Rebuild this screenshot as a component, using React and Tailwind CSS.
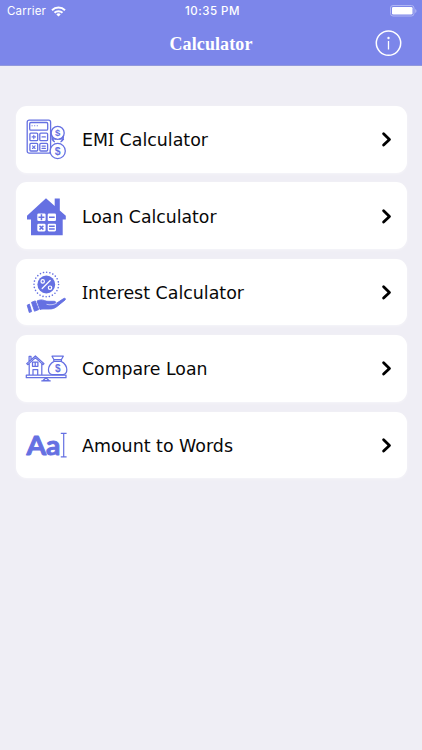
import React from "react";

const C = "#6570e2";

function Dollar({ x, y, size }) {
  return (
    <text x={x} y={y} fontSize={size} textAnchor="middle" fontFamily="Liberation Sans, sans-serif" fontWeight="700" fill={C} stroke="none">$</text>
  );
}

function EmiIcon() {
  return (
    <svg width="44" height="44" viewBox="0 0 44 44" fill="none" stroke={C} strokeWidth="1.3" strokeLinecap="round">
      <rect x="3.2" y="3.2" width="23.4" height="33" rx="2" />
      <rect x="5.7" y="5.5" width="18" height="7.7" rx="1.2" />
      <path d="M8 8.7h.2M10.6 8.7h.2M13.2 8.7h.2" strokeWidth="1.1" />
      <rect x="5.9" y="16.1" width="7.8" height="7.6" rx="1" />
      <rect x="15.8" y="16.1" width="7.8" height="7.6" rx="1" />
      <rect x="5.9" y="26.4" width="7.8" height="7.6" rx="1" />
      <rect x="15.8" y="26.4" width="7.8" height="7.6" rx="1" />
      <path d="M8.1 19.9h3.4M9.8 18.2v3.4M18 19.9h3.4M8.5 28.9l2.6 2.6M11.1 28.9l-2.6 2.6M18 29.1h3.4M18 31.4h3.4" strokeWidth="1.1" />
      <circle cx="33.7" cy="15.9" r="6.5" fill="white" />
      <path d="M28 19.5c-.3 2.2.8 4.2 2.4 5.2M39.3 19.5c.3 2.2-.8 4.2-2.4 5.2M28 22.5c1.3-.8 2.8-.9 4-.4M39.5 22.5c-1.3-.8-2.8-.9-4-.4" />
      <circle cx="33.7" cy="34" r="7.6" fill="white" />
      <Dollar x="33.7" y="19.4" size="9.5" />
      <Dollar x="33.7" y="37.7" size="10.5" />
    </svg>
  );
}

function HouseIcon() {
  return (
    <svg width="44" height="44" viewBox="0 0 44 44">
      <path d="M22 4.3 30.7 12V4.6h5.1v11.8l6 5.4v3.7h-3.1v15.8H7V25.5H3v-3.7Z" fill={C} />
      <g fill="white">
        <rect x="13.3" y="19.4" width="8.3" height="7.6" rx="1.3" />
        <rect x="23.7" y="19.4" width="8.3" height="7.6" rx="1.3" />
        <rect x="13.3" y="29.8" width="8.3" height="7.6" rx="1.3" />
        <rect x="23.7" y="29.8" width="8.3" height="7.6" rx="1.3" />
      </g>
      <path d="M14.5 23.2h5.9M17.45 20.2v6M25 23.2h5.7M15.5 31.7l3.9 3.9M19.4 31.7l-3.9 3.9M25 32.3h5.7M25 35h5.7" stroke={C} strokeWidth="1.5" />
    </svg>
  );
}

function InterestIcon() {
  return (
    <svg width="44" height="44" viewBox="0 0 44 44">
      <circle cx="22.3" cy="14.5" r="12.3" fill="none" stroke={C} strokeWidth="1.6" strokeDasharray="0.01 3.21" strokeLinecap="round" />
      <circle cx="22.3" cy="14.5" r="8.9" fill={C} />
      <g fill="none" stroke="white" strokeWidth="1.2" strokeLinecap="round">
        <path d="m18.2 18.5 8-8" />
        <circle cx="18.7" cy="11.4" r="1.7" />
        <circle cx="26" cy="17.7" r="1.7" />
      </g>
      <g fill={C} stroke={C} strokeWidth=".9" strokeLinejoin="round">
        <path d="m3.200 35.2 2.2-1.1 2.2 7.5-2.3.9Z" />
        <path d="m7.5 32.3 3.8-1.4 3.4 8.7-4.2 1.600Z" />
        <path d="M13 31c2.5-1.2 5-1.5 7.500-.4 1.5.7 3 .7 4.600.7h4.800c1.500 0 2.100.7 1.700 1.600-.4.800-1.500 1-3 1l-5.800.4c3.500.8 7.200.4 10-1.200l6.800-4.500c1.400-.8 2.500.2 1.500 1.300l-8 6.500c-2.300 1.900-4.800 2.600-7.700 2.600h-6.500c-1.200 0-2 .2-2.900.5Z" />
      </g>
      <path d="M22.500 34.300c3.700 1 7.500.5 10.300-1.300" fill="none" stroke="white" strokeWidth=".6" />
    </svg>
  );
}

function CompareIcon() {
  return (
    <svg width="44" height="44" viewBox="0 0 44 44" fill="none" stroke={C} strokeWidth="1.25" strokeLinejoin="round">
      <path d="M5.200 17v12.1M17.8 17v12.1M2.7 17.6 11.4 10l8.6 7.6-1 1-7.600-6.700-7.600 6.700ZM5.100 15V10.400H7v3" />
      <rect x="8.5" y="16" width="5.4" height="4.3" />
      <path d="M11.2 16v4.3M9 29.1v-5.600h4.700v5.600" />
      <path d="M28 10.2h11.3l-2 3.5h-7.3ZM29.800 13.700h7.600v1.700h-7.600ZM30 15.400c-7.500 4.500-6.700 13.200-1.500 13.200h10.300c5.200 0 6-8.700-1.500-13.200" />
      <rect x="2.3" y="29.2" width="39.7" height="2.5" />
      <path d="m22 31.7-3.2 3h6.400ZM17.300 34.800h9.400" />
      <Dollar x="33.7" y="25.500" size="10" />
    </svg>
  );
}

function WordsIcon() {
  return (
    <svg width="44" height="44" viewBox="0 0 44 44">
      <text x="2.4" y="31.6" textLength="34" lengthAdjust="spacingAndGlyphs" fontFamily="Lato, sans-serif" fontWeight="700" fontSize="26" fill={C} stroke={C} strokeWidth=".9" strokeLinejoin="round">Aa</text>
      <path d="M36.8 10.3h5.8M36.8 33.9h5.8M39.7 10.3v23.6" stroke={C} strokeWidth="1.2" />
    </svg>
  );
}

const items = [
  { label: "EMI Calculator", Icon: EmiIcon, width: 126 },
  { label: "Loan Calculator", Icon: HouseIcon, width: 134.5 },
  { label: "Interest Calculator", Icon: InterestIcon, width: 162 },
  { label: "Compare Loan", Icon: CompareIcon, width: 125.5 },
  { label: "Amount to Words", Icon: WordsIcon, width: 151 },
];

function Label({ text, width }) {
  return (
    <svg className="ml-[13.5px] h-6 w-48" viewBox="0 0 192 24">
      <text x="0" y="18.8" textLength={width} lengthAdjust="spacingAndGlyphs" fontSize="17" fontFamily="Verdana, DejaVu Sans, sans-serif" fill="#080808">
        {text.split(/(I)/).filter(Boolean).map((part, i) =>
          part === "I" ? <tspan key={i} fontFamily="Verdana, Noto Sans, sans-serif" fontSize="17.4">I</tspan> : part
        )}
      </text>
    </svg>
  );
}

export default function App() {
  return (
    <div className="h-[750px] w-[422px] overflow-hidden bg-[#efeef5] font-['Inter','Liberation_Sans',sans-serif]">
      <header className="h-[66px] border-b border-[#9299dc] bg-[#7c86ea] text-white">
        <div className="grid h-[22px] grid-cols-3 items-center pl-[7px] pr-[5px] text-[11.5px] leading-none">
          <div className="flex items-center gap-[5px] pt-px">
            <span className="tracking-[0.2px]">Carrier</span>
            <svg width="15" height="11" viewBox="0 0 15 11" fill="none" stroke="white" strokeWidth="2">
              <path d="M1 4.2a9.3 9.3 0 0 1 13 0M3.5 6.8a5.7 5.7 0 0 1 8 0" />
              <path d="M7.5 10.6 5.3 8.4a3.1 3.1 0 0 1 4.4 0Z" fill="white" stroke="none" />
            </svg>
          </div>
          <span className="whitespace-nowrap pl-px pt-px text-center font-medium tracking-[0.5px]">10:35 PM</span>
          <svg className="justify-self-end" width="27" height="12" viewBox="0 0 27 12">
            <rect x=".5" y=".5" width="23.5" height="10.5" rx="2.5" fill="none" stroke="#b0b6f3" />
            <rect x="2" y="2" width="20.5" height="7.5" rx="1.3" fill="white" />
            <path d="M25.2 4v4q1.3-.6 1.3-2t-1.3-2" fill="#b0b6f3" />
          </svg>
        </div>
        <div className="grid h-[43px] grid-cols-[1fr_auto_1fr] items-center px-5">
          <span />
          <h1 className="font-['Liberation_Serif',serif] text-[18px] font-bold leading-none tracking-[0.1px]">Calculator</h1>
          <svg className="justify-self-end" width="27" height="27" viewBox="0 0 27 27" fill="none" stroke="white">
            <circle cx="13.5" cy="13.1" r="12.2" strokeWidth="1.5" />
            <path d="M13.5 11v8.5" strokeWidth="1.3" />
            <circle cx="13.5" cy="8" r="1.2" fill="white" stroke="none" />
          </svg>
        </div>
      </header>
      <main className="flex flex-col gap-[9.9px] px-[15.5px] pt-[40px]">
        {items.map(({ label, Icon, width }) => (
          <div key={label} className="flex h-[66.5px] items-center rounded-[11px] bg-white pl-[8.5px] pr-[14px] shadow-[0_1px_3px_rgba(255,255,255,0.45)]">
            <Icon />
            <Label text={label} width={width} />
            <svg className="ml-auto" width="12" height="18" viewBox="0 0 12 18" fill="none" stroke="black" strokeWidth="2.8" strokeLinecap="round" strokeLinejoin="round">
              <path d="m2.6 3.8 5.9 5.6-5.9 5.6" />
            </svg>
          </div>
        ))}
      </main>
    </div>
  );
}
